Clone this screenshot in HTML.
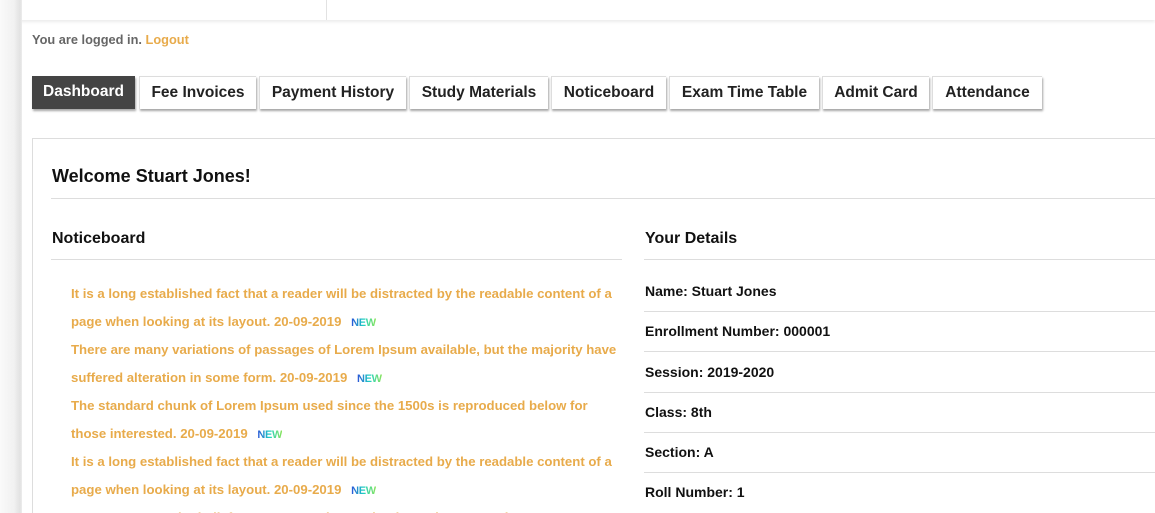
<!DOCTYPE html>
<html style="width:1155px;height:513px;overflow:hidden"><head><style>
*{margin:0;padding:0;box-sizing:border-box}
body{width:1155px;height:513px;overflow:hidden;background:#fff;font-family:"Liberation Sans",Arial,sans-serif;position:relative;font-weight:bold}
.strip{position:absolute;left:0;top:0;width:22px;height:513px;background:linear-gradient(to right,#fafafa 0,#f1f1f1 14px,#e2e2e2 20px,#ededed 22px)}
.top{position:absolute;left:0;top:0;width:1155px;height:20px;background:#fff;box-shadow:0 2px 3px rgba(0,0,0,.08)}
.vd{position:absolute;left:326px;top:0;width:1px;height:20px;background:#e2e2e2}
.abs{position:absolute;white-space:nowrap}
.tab{position:absolute;top:76px;height:33px;background:#fff;color:#222;font-size:15.5px;line-height:31px;text-align:center;box-shadow:1px 2px 2px rgba(0,0,0,.35);border:1px solid #ddd;border-width:1px 0 0 1px}
.tab.on{background:#444;color:#fff;border:0}
.panel{position:absolute;left:32px;top:138px;width:1140px;height:380px;border:1px solid #ddd;border-bottom:0}
.hr{position:absolute;height:1px;background:#ddd}
.note{position:absolute;left:71px;font-size:13.2px;color:#e8ab4b;line-height:28px;white-space:nowrap;height:240px;overflow:hidden}
.new{font-size:11px;line-height:0;font-weight:bold;background:linear-gradient(90deg,#2b4fd8,#1fd1c4,#8be45a);-webkit-background-clip:text;color:transparent;margin-left:6px;letter-spacing:-0.3px}
.d{position:absolute;left:645px;font-size:14px;color:#111}
</style></head><body>
<div class="top"><div class="vd"></div></div>
<div class="strip"></div>
<div class="abs" style="left:32px;top:32px;font-size:12.8px;color:#666">You are logged in. <span style="color:#e8ab4b">Logout</span></div>
<div class="tab on" style="left:32px;width:103px">Dashboard</div>
<div class="tab" style="left:139px;width:117px">Fee Invoices</div>
<div class="tab" style="left:259px;width:147px">Payment History</div>
<div class="tab" style="left:409px;width:139px">Study Materials</div>
<div class="tab" style="left:551px;width:115px">Noticeboard</div>
<div class="tab" style="left:669px;width:150px">Exam Time Table</div>
<div class="tab" style="left:822px;width:107px">Admit Card</div>
<div class="tab" style="left:932px;width:110px">Attendance</div>
<div class="panel"></div>
<div class="abs" style="left:52px;top:166px;font-size:18px;color:#111">Welcome Stuart Jones!</div>
<div class="hr" style="left:51px;top:198px;width:1104px"></div>
<div class="abs" style="left:52px;top:230px;font-size:16px;color:#111">Noticeboard</div>
<div class="hr" style="left:51px;top:259px;width:571px"></div>
<div class="abs" style="left:645px;top:230px;font-size:16px;color:#111">Your Details</div>
<div class="hr" style="left:644px;top:259px;width:511px"></div>
<div class="note" style="top:280px">It is a long established fact that a reader will be distracted by the readable content of a<br>page when looking at its layout. 20-09-2019 <span class="new">NEW</span><br>There are many variations of passages of Lorem Ipsum available, but the majority have<br>suffered alteration in some form. 20-09-2019 <span class="new">NEW</span><br>The standard chunk of Lorem Ipsum used since the 1500s is reproduced below for<br>those interested. 20-09-2019 <span class="new">NEW</span><br>It is a long established fact that a reader will be distracted by the readable content of a<br>page when looking at its layout. 20-09-2019 <span class="new">NEW</span><br>Contrary to popular belief, Lorem Ipsum is not simply random text. It has roots</div>
<div class="d" style="top:283px">Name: Stuart Jones</div>
<div class="hr" style="left:644px;top:311px;width:511px"></div>
<div class="d" style="top:323px">Enrollment Number: 000001</div>
<div class="hr" style="left:644px;top:351px;width:511px"></div>
<div class="d" style="top:364px">Session: 2019-2020</div>
<div class="hr" style="left:644px;top:392px;width:511px"></div>
<div class="d" style="top:404px">Class: 8th</div>
<div class="hr" style="left:644px;top:432px;width:511px"></div>
<div class="d" style="top:444px">Section: A</div>
<div class="hr" style="left:644px;top:472px;width:511px"></div>
<div class="d" style="top:484px">Roll Number: 1</div>
</body></html>
